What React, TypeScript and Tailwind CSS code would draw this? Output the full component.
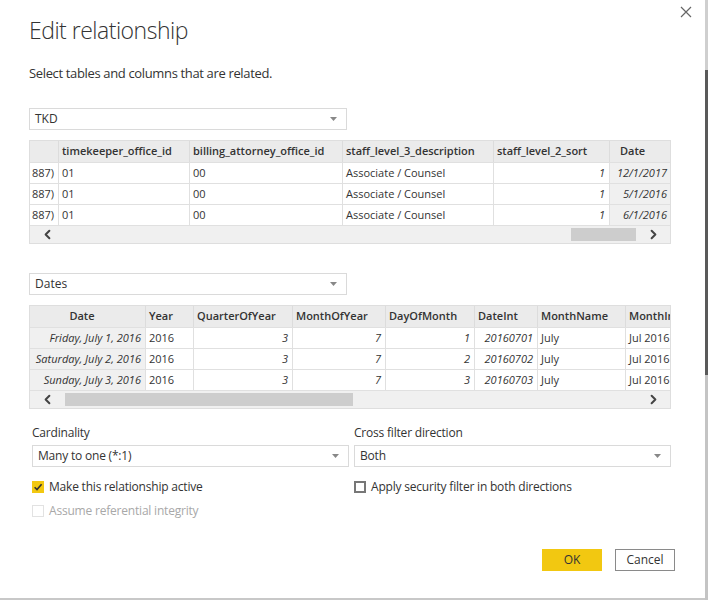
import React from "react";
import { ChevronLeft, ChevronRight } from "lucide-react";

type Col = { title: string; w: number; align?: "left" | "right"; italic?: boolean; shade?: boolean; head?: string };

const tkdCols: Col[] = [
  { title: "", w: 29, align: "right" },
  { title: "timekeeper_office_id", w: 131 },
  { title: "billing_attorney_office_id", w: 153 },
  { title: "staff_level_3_description", w: 151 },
  { title: "staff_level_2_sort", w: 116, align: "right", italic: true },
  { title: "Date", w: 62, align: "right", italic: true, shade: true, head: "pl-[10px] text-left" },
];

const tkdRows = [
  ["887)", "01", "00", "Associate / Counsel", "1", "12/1/2017"],
  ["887)", "01", "00", "Associate / Counsel", "1", "5/1/2016"],
  ["887)", "01", "00", "Associate / Counsel", "1", "6/1/2016"],
];

const dateCols: Col[] = [
  { title: "Date", w: 116, align: "right", italic: true, shade: true, head: "text-center pr-[14px]" },
  { title: "Year", w: 48 },
  { title: "QuarterOfYear", w: 99, align: "right", italic: true },
  { title: "MonthOfYear", w: 93, align: "right", italic: true },
  { title: "DayOfMonth", w: 89, align: "right", italic: true },
  { title: "DateInt", w: 63, align: "right", italic: true },
  { title: "MonthName", w: 88 },
  { title: "MonthInCalendar", w: 70 },
];

const dateRows = [
  ["Friday, July 1, 2016", "2016", "3", "7", "1", "20160701", "July", "Jul 2016"],
  ["Saturday, July 2, 2016", "2016", "3", "7", "2", "20160702", "July", "Jul 2016"],
  ["Sunday, July 3, 2016", "2016", "3", "7", "3", "20160703", "July", "Jul 2016"],
];

function Caret() {
  return (
    <svg width="7" height="4" viewBox="0 0 7 4" className="shrink-0">
      <path d="M0 0 H7 L3.5 4 Z" fill="#888" />
    </svg>
  );
}

function Dropdown({ value, className = "" }: { value: string; className?: string }) {
  return (
    <div className={`flex h-[22px] items-center justify-between border border-[#dadada] bg-white pl-[5px] pr-[9px] text-[#333] ${className}`}>
      <span>{value}</span>
      <Caret />
    </div>
  );
}

function Grid({ cols, rows, thumb }: { cols: Col[]; rows: string[][]; thumb: [number, number] }) {
  return (
    <div className="w-[642px] overflow-hidden border border-[#dedede] bg-white text-[11px] text-[#333]">
      <div className="flex h-[21px] bg-[#ebebeb]">
        {cols.map((c, i) => (
          <div
            key={i}
            style={{ width: c.w }}
            className={`flex shrink-0 items-center overflow-hidden whitespace-nowrap border-r border-[#dcdcdc] px-[3px] font-semibold ${c.head ?? ""}`}
          >
            <span className={c.head?.includes("text-center") ? "w-full" : ""}>{c.title}</span>
          </div>
        ))}
      </div>
      {rows.map((r, ri) => (
        <div key={ri} className="flex h-[21px] border-t border-[#e0e0e0]">
          {r.map((v, ci) => {
            const c = cols[ci];
            return (
              <div
                key={ci}
                style={{ width: c.w }}
                className={`flex shrink-0 items-center overflow-hidden whitespace-nowrap border-r border-[#e0e0e0] ${
                  c.align === "right" ? "justify-end pr-[4px]" : "pl-[3px]"
                } ${c.italic ? "italic" : ""} ${c.shade ? "bg-[#f0f0f0]" : ""}`}
              >
                {v}
              </div>
            );
          })}
        </div>
      ))}
      <div className="flex h-[18px] items-center border-t border-[#e0e0e0] bg-[#f0f0f0]">
        <div className="flex w-[34px] justify-center">
          <ChevronLeft size={15} strokeWidth={3.2} color="#444" />
        </div>
        <div className="relative h-[13px] flex-1">
          <div className="absolute top-0 h-[13px] bg-[#cdcdcd]" style={{ left: thumb[0], width: thumb[1] }} />
        </div>
        <div className="flex w-[34px] justify-center">
          <ChevronRight size={15} strokeWidth={3.2} color="#444" />
        </div>
      </div>
    </div>
  );
}

function Check({ checked, disabled, label }: { checked?: boolean; disabled?: boolean; label: string }) {
  return (
    <div className="flex h-[16px] items-center gap-[5px]">
      {checked ? (
        <div className="flex h-[12px] w-[12px] items-center justify-center bg-[#f2c811]">
          <svg width="10" height="10" viewBox="0 0 10 10">
            <path d="M1.6 5.2 L4 7.6 L8.6 2.2" fill="none" stroke="#333" strokeWidth="1.6" />
          </svg>
        </div>
      ) : (
        <div className={`h-[12px] w-[12px] ${disabled ? "border border-[#e2e2e2]" : "border-2 border-[#777]"}`} />
      )}
      <span className={`text-[12px] tracking-[-0.2px] ${disabled ? "text-[#a8a8a8]" : "text-[#333]"}`}>{label}</span>
    </div>
  );
}

export default function App() {
  return (
    <div className="flex h-[600px] w-[708px] bg-[#c8c8c8]" style={{ fontFamily: '"Open Sans", "Noto Sans", sans-serif' }}>
      <div className="relative h-[598px] w-[705px] bg-white">
        <button className="absolute right-[12px] top-[5px] flex h-[14px] w-[14px] items-center justify-center">
          <svg width="12" height="12" viewBox="0 0 12 12">
            <path d="M1 1 L11 11 M11 1 L1 11" stroke="#666" strokeWidth="1.2" />
          </svg>
        </button>

        <div className="pl-[29px] pt-[14px]">
          <h1 className="text-[23px] font-light leading-[32px] tracking-[-0.5px] text-[#333]">Edit relationship</h1>
          <p className="mt-[18px] text-[13px] leading-[18px] tracking-[-0.35px] text-[#333]">Select tables and columns that are related.</p>

          <Dropdown value="TKD" className="mt-[26px] w-[318px] text-[12px]" />
          <div className="mt-[10px]">
            <Grid cols={tkdCols} rows={tkdRows} thumb={[507, 65]} />
          </div>

          <Dropdown value="Dates" className="mt-[29px] w-[318px] text-[12px]" />
          <div className="mt-[10px]">
            <Grid cols={dateCols} rows={dateRows} thumb={[1, 288]} />
          </div>

          <div className="ml-[3px] mt-[14px] grid w-[639px] grid-cols-2 gap-x-[5px]">
            <div>
              <div className="text-[12px] leading-[20px] tracking-[-0.2px] text-[#333]">Cardinality</div>
              <Dropdown value="Many to one (*:1)" className="mt-[2px] text-[12px] tracking-[-0.2px]" />
              <div className="mt-[12px] flex flex-col gap-[8px]">
                <Check checked label="Make this relationship active" />
                <Check disabled label="Assume referential integrity" />
              </div>
            </div>
            <div>
              <div className="text-[12px] leading-[20px] tracking-[-0.2px] text-[#333]">Cross filter direction</div>
              <Dropdown value="Both" className="mt-[2px] text-[12px] tracking-[-0.2px]" />
              <div className="mt-[12px]">
                <Check label="Apply security filter in both directions" />
              </div>
            </div>
          </div>

          <div className="mr-[30px] mt-[30px] flex justify-end gap-[13px]">
            <button className="h-[22px] w-[60px] bg-[#f2c811] text-[12px] text-[#333]">OK</button>
            <button className="h-[22px] w-[60px] border border-[#8a8a8a] bg-white text-[12px] text-[#333]">Cancel</button>
          </div>
        </div>
      </div>
      <div className="flex w-[3px] flex-col">
        <div className="h-[70px] bg-[#cfcfcf]" />
        <div className="h-[305px] bg-[#5a5a5a]" />
        <div className="flex-1 bg-[#c4c4c4]" />
      </div>
    </div>
  );
}
